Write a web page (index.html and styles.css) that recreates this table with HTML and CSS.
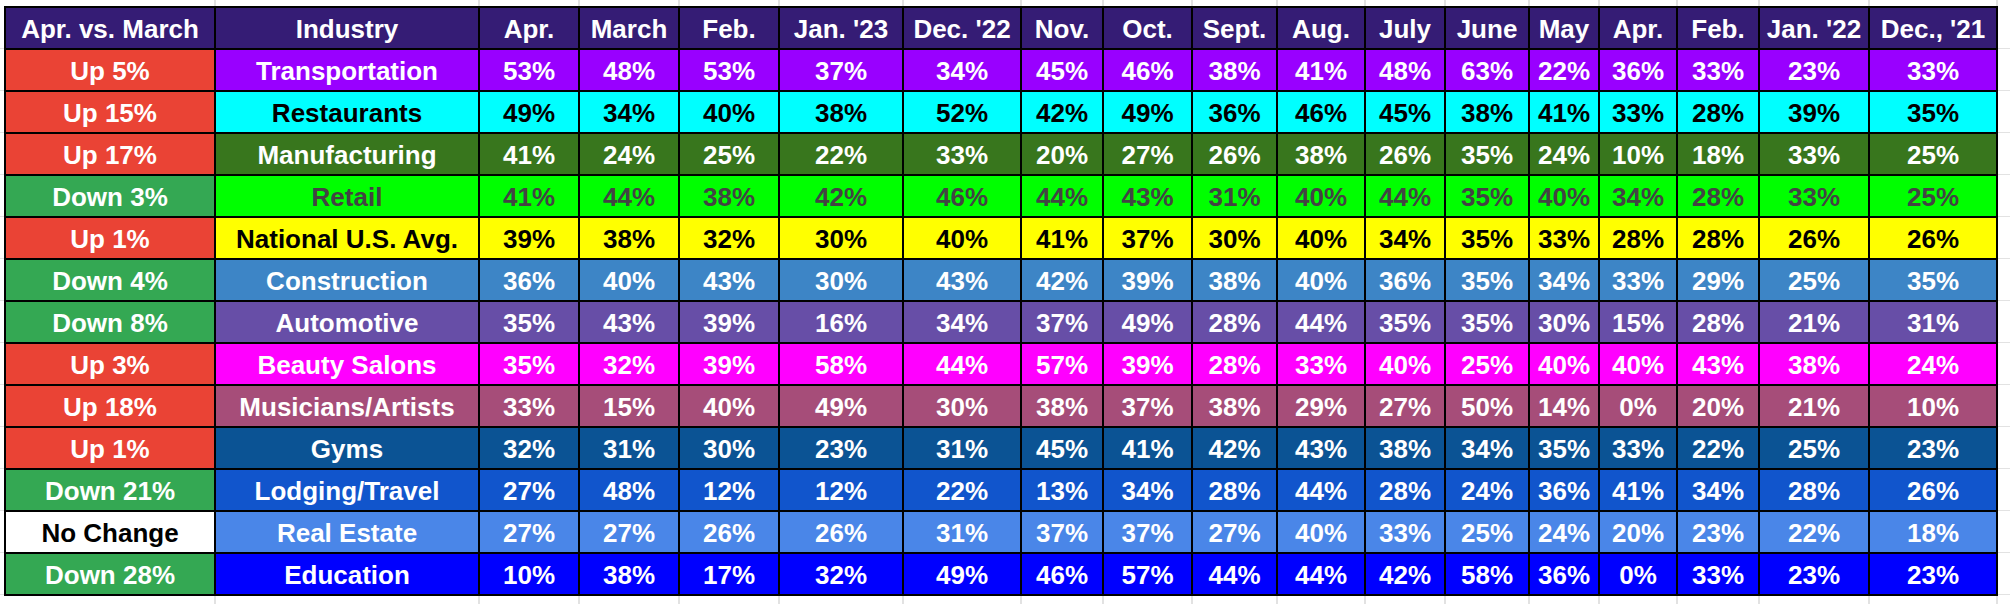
FILE: index.html
```html
<!DOCTYPE html>
<html>
<head>
<meta charset="utf-8">
<title>Industry table</title>
<link rel="stylesheet" href="styles.css">
</head>
<body>
<div class="sheet">
  <div class="strip top"><span></span><span></span><span></span><span></span><span></span><span></span><span></span><span></span><span></span><span></span><span></span><span></span><span></span><span></span><span></span><span></span><span></span><span></span></div>
  <div class="table">
    <div class="row head">
      <div>Apr. vs. March</div><div>Industry</div><div>Apr.</div><div>March</div><div>Feb.</div><div>Jan. '23</div><div>Dec. '22</div><div>Nov.</div><div>Oct.</div><div>Sept.</div><div>Aug.</div><div>July</div><div>June</div><div>May</div><div>Apr.</div><div>Feb.</div><div>Jan. '22</div><div>Dec., '21</div>
    </div>
    <div class="row transport">
      <div class="chg up">Up 5%</div><div>Transportation</div><div>53%</div><div>48%</div><div>53%</div><div>37%</div><div>34%</div><div>45%</div><div>46%</div><div>38%</div><div>41%</div><div>48%</div><div>63%</div><div>22%</div><div>36%</div><div>33%</div><div>23%</div><div>33%</div>
    </div>
    <div class="row restaurants">
      <div class="chg up">Up 15%</div><div>Restaurants</div><div>49%</div><div>34%</div><div>40%</div><div>38%</div><div>52%</div><div>42%</div><div>49%</div><div>36%</div><div>46%</div><div>45%</div><div>38%</div><div>41%</div><div>33%</div><div>28%</div><div>39%</div><div>35%</div>
    </div>
    <div class="row manufacturing">
      <div class="chg up">Up 17%</div><div>Manufacturing</div><div>41%</div><div>24%</div><div>25%</div><div>22%</div><div>33%</div><div>20%</div><div>27%</div><div>26%</div><div>38%</div><div>26%</div><div>35%</div><div>24%</div><div>10%</div><div>18%</div><div>33%</div><div>25%</div>
    </div>
    <div class="row retail">
      <div class="chg down">Down 3%</div><div>Retail</div><div>41%</div><div>44%</div><div>38%</div><div>42%</div><div>46%</div><div>44%</div><div>43%</div><div>31%</div><div>40%</div><div>44%</div><div>35%</div><div>40%</div><div>34%</div><div>28%</div><div>33%</div><div>25%</div>
    </div>
    <div class="row national">
      <div class="chg up">Up 1%</div><div>National U.S. Avg.</div><div>39%</div><div>38%</div><div>32%</div><div>30%</div><div>40%</div><div>41%</div><div>37%</div><div>30%</div><div>40%</div><div>34%</div><div>35%</div><div>33%</div><div>28%</div><div>28%</div><div>26%</div><div>26%</div>
    </div>
    <div class="row construction">
      <div class="chg down">Down 4%</div><div>Construction</div><div>36%</div><div>40%</div><div>43%</div><div>30%</div><div>43%</div><div>42%</div><div>39%</div><div>38%</div><div>40%</div><div>36%</div><div>35%</div><div>34%</div><div>33%</div><div>29%</div><div>25%</div><div>35%</div>
    </div>
    <div class="row automotive">
      <div class="chg down">Down 8%</div><div>Automotive</div><div>35%</div><div>43%</div><div>39%</div><div>16%</div><div>34%</div><div>37%</div><div>49%</div><div>28%</div><div>44%</div><div>35%</div><div>35%</div><div>30%</div><div>15%</div><div>28%</div><div>21%</div><div>31%</div>
    </div>
    <div class="row beauty">
      <div class="chg up">Up 3%</div><div>Beauty Salons</div><div>35%</div><div>32%</div><div>39%</div><div>58%</div><div>44%</div><div>57%</div><div>39%</div><div>28%</div><div>33%</div><div>40%</div><div>25%</div><div>40%</div><div>40%</div><div>43%</div><div>38%</div><div>24%</div>
    </div>
    <div class="row musicians">
      <div class="chg up">Up 18%</div><div>Musicians/Artists</div><div>33%</div><div>15%</div><div>40%</div><div>49%</div><div>30%</div><div>38%</div><div>37%</div><div>38%</div><div>29%</div><div>27%</div><div>50%</div><div>14%</div><div>0%</div><div>20%</div><div>21%</div><div>10%</div>
    </div>
    <div class="row gyms">
      <div class="chg up">Up 1%</div><div>Gyms</div><div>32%</div><div>31%</div><div>30%</div><div>23%</div><div>31%</div><div>45%</div><div>41%</div><div>42%</div><div>43%</div><div>38%</div><div>34%</div><div>35%</div><div>33%</div><div>22%</div><div>25%</div><div>23%</div>
    </div>
    <div class="row lodging">
      <div class="chg down">Down 21%</div><div>Lodging/Travel</div><div>27%</div><div>48%</div><div>12%</div><div>12%</div><div>22%</div><div>13%</div><div>34%</div><div>28%</div><div>44%</div><div>28%</div><div>24%</div><div>36%</div><div>41%</div><div>34%</div><div>28%</div><div>26%</div>
    </div>
    <div class="row realestate">
      <div class="chg same">No Change</div><div>Real Estate</div><div>27%</div><div>27%</div><div>26%</div><div>26%</div><div>31%</div><div>37%</div><div>37%</div><div>27%</div><div>40%</div><div>33%</div><div>25%</div><div>24%</div><div>20%</div><div>23%</div><div>22%</div><div>18%</div>
    </div>
    <div class="row education">
      <div class="chg down">Down 28%</div><div>Education</div><div>10%</div><div>38%</div><div>17%</div><div>32%</div><div>49%</div><div>46%</div><div>57%</div><div>44%</div><div>44%</div><div>42%</div><div>58%</div><div>36%</div><div>0%</div><div>33%</div><div>23%</div><div>23%</div>
    </div>
  </div>
  <div class="strip bottom"><span></span><span></span><span></span><span></span><span></span><span></span><span></span><span></span><span></span><span></span><span></span><span></span><span></span><span></span><span></span><span></span><span></span><span></span></div>
</div>
</body>
</html>
```

FILE: styles.css
```css
html, body {
  margin: 0;
  padding: 0;
  background: #ffffff;
}

body {
  font-family: "Liberation Sans", Arial, sans-serif;
  font-weight: bold;
  font-size: 26px;
}

.sheet {
  --cols: 208px 262px 98px 98px 98px 122px 116px 80px 87px 83px 86px 78px 82px 68px 76px 80px 108px 126px;
  width: 2010px;
  height: 604px;
  box-sizing: border-box;
  padding-left: 4px;
  overflow: hidden;
  background-color: #ffffff;
  background-image: repeating-linear-gradient(to bottom, transparent 0, transparent 41px, #e2e2e2 41px, #e2e2e2 42px);
  background-position: 0 7px;
}

.strip {
  display: grid;
  grid-template-columns: var(--cols);
  column-gap: 2px;
  padding-left: 2px;
  width: max-content;
  background: #ffffff;
}

.strip span {
  background: #ffffff;
  box-shadow: 2px 0 0 #e2e2e2;
}

.strip.top {
  height: 6px;
}

.strip.bottom {
  height: 8px;
}

.table {
  display: flex;
  flex-direction: column;
  gap: 2px;
  padding: 2px;
  background: #000000;
  width: max-content;
}

.row {
  display: grid;
  grid-template-columns: var(--cols);
  column-gap: 2px;
  height: 40px;
  --bg: #ffffff;
  --fg: #ffffff;
}

.row > div {
  display: flex;
  align-items: center;
  justify-content: center;
  box-sizing: border-box;
  padding-top: 2px;
  white-space: nowrap;
  background: var(--bg);
  color: var(--fg);
}

.row > .chg.up {
  background: #ea4335;
  color: #ffffff;
}

.row > .chg.down {
  background: #34a853;
  color: #ffffff;
}

.row > .chg.same {
  background: #ffffff;
  color: #000000;
}

.head { --bg: #351c75; --fg: #ffffff; }
.transport { --bg: #9900ff; --fg: #ffffff; }
.restaurants { --bg: #00ffff; --fg: #000000; }
.manufacturing { --bg: #38761d; --fg: #ffffff; }
.retail { --bg: #00ff00; --fg: #434343; }
.national { --bg: #ffff00; --fg: #000000; }
.construction { --bg: #3d85c6; --fg: #ffffff; }
.automotive { --bg: #674ea7; --fg: #ffffff; }
.beauty { --bg: #ff00ff; --fg: #ffffff; }
.musicians { --bg: #a64d79; --fg: #ffffff; }
.gyms { --bg: #0b5394; --fg: #ffffff; }
.lodging { --bg: #1155cc; --fg: #ffffff; }
.realestate { --bg: #4a86e8; --fg: #ffffff; }
.education { --bg: #0000ff; --fg: #ffffff; }
```
